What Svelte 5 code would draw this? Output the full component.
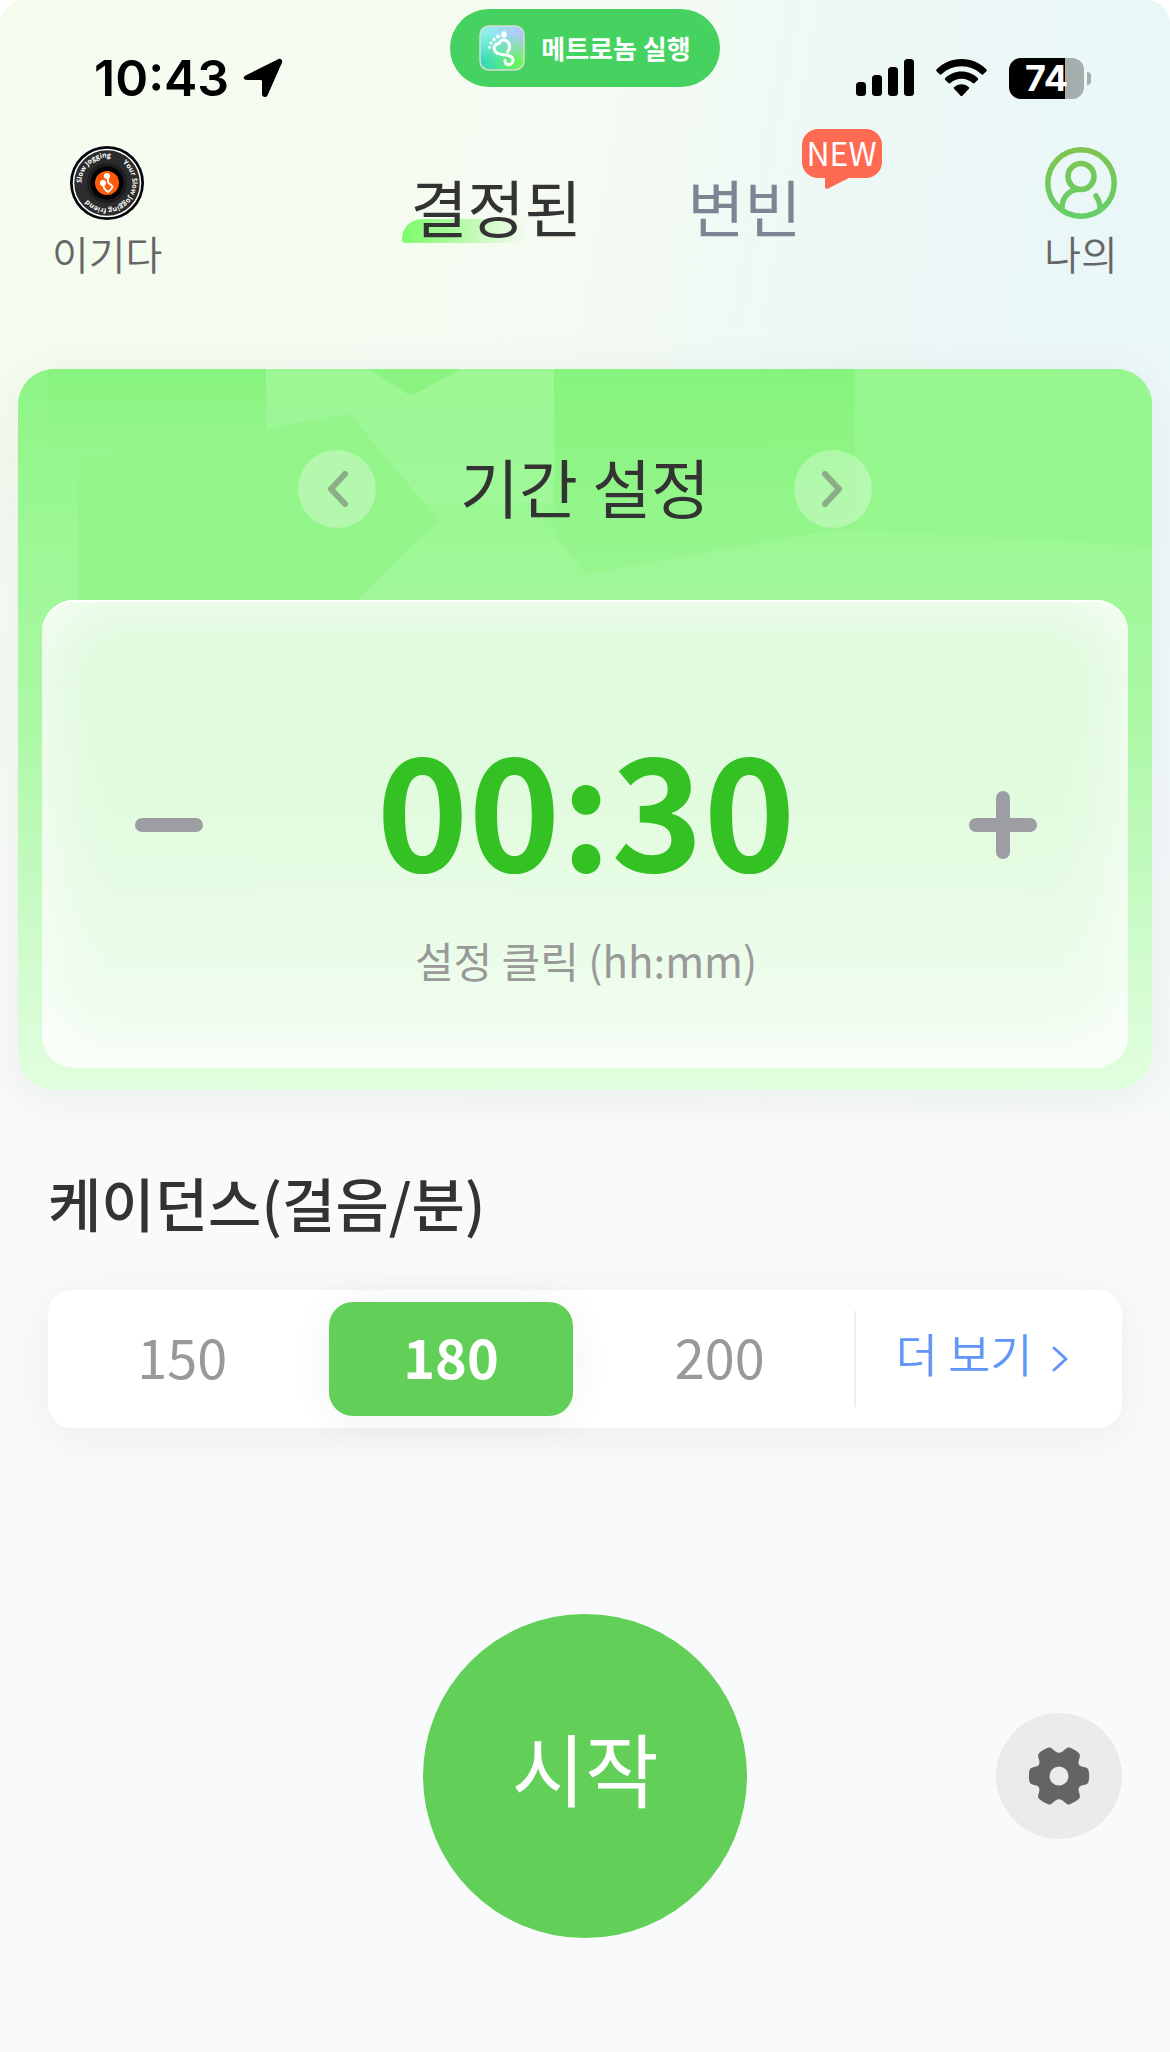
<script lang="ts">
    const cadences: number[] = [150, 180, 200];
    const modes: string[] = ['기간 설정', '거리 설정'];

    let cadence = $state(180);
    let minutes = $state(30);
    let tab = $state('fixed');
    let mode = $state(0);

    const clock = $derived(
        String(Math.floor(minutes / 60)).padStart(2, '0') + ':' + String(minutes % 60).padStart(2, '0')
    );

    function changeMinutes(step: number) {
        minutes = Math.max(5, minutes + step);
    }

    function changeMode() {
        mode = (mode + 1) % modes.length;
    }
</script>

<main>
    <header class="status-bar">
        <div class="status-left">
            <span class="time">10:43</span>
            <svg class="location" viewBox="0 0 40 40" aria-hidden="true">
                <path d="M2.6 17.4 35 1.2c2.7-1.3 5 .9 3.9 3.6L24.6 37.2c-1.2 2.7-5.6 2.3-5.6-1.2V23.4c0-1-.5-1.5-1.5-1.5H4C.2 21.900-.5 18.900 2.600 17.400Z" />
            </svg>
        </div>

        <a class="live-pill" href="#metronome">
            <svg class="app-icon" viewBox="0 0 46 46" aria-hidden="true">
                <defs>
                    <linearGradient id="app-bg" x1="0" y1="0" x2="1" y2="0">
                        <stop offset="0" stop-color="#86f6e8" />
                        <stop offset="1" stop-color="#b3c4fb" />
                    </linearGradient>
                    <linearGradient id="app-low" x1="0" y1="0" x2="1" y2="0">
                        <stop offset="0" stop-color="#2fd8c0" />
                        <stop offset="1" stop-color="#72f94b" />
                    </linearGradient>
                    <linearGradient id="app-fade" x1="0" y1="0" x2="0" y2="1">
                        <stop offset="0.2" stop-color="#000" />
                        <stop offset="0.8" stop-color="#fff" />
                    </linearGradient>
                    <mask id="app-mask"><rect width="46" height="46" fill="url(#app-fade)" /></mask>
                </defs>
                <rect x="1" y="1" width="44" height="44" rx="9" fill="url(#app-bg)" />
                <rect x="1" y="1" width="44" height="44" rx="9" fill="url(#app-low)" mask="url(#app-mask)" />
                <rect x="1" y="1" width="44" height="44" rx="9" fill="none" stroke="#d5dcd8" stroke-width="1.500" />
                <g fill="#fff">
                    <ellipse cx="25" cy="9.500" rx="2.700" ry="3.300" />
                    <circle cx="19" cy="11.500" r="2" />
                    <circle cx="15" cy="14.500" r="1.700" />
                    <circle cx="12" cy="18" r="1.500" />
                    <circle cx="10.500" cy="22.500" r="1.400" />
                </g>
                <path d="M28.500 27c3-3 3-9-1.500-11.500-3.500-1.500-6.500.5-7 3-4 0-6 4-4 7.500 2.500 4.500 8.500 3 13.500 4.500 5.500 1.500 5.500 6.500 2.500 8.500-3 1.500-6.500 0-6-3.500" fill="none" stroke="#fff" stroke-width="3" stroke-linecap="round" stroke-linejoin="round" />
            </svg>
            <span>메트로놈 실행</span>
        </a>

        <div class="status-right">
            <svg class="signal" viewBox="0 0 58 38" aria-hidden="true">
                <rect x="0" y="23" width="10" height="14" rx="3.500" />
                <rect x="16" y="16" width="10" height="21" rx="3.500" />
                <rect x="32" y="8" width="10" height="29" rx="3.500" />
                <rect x="48" y="0" width="10" height="37" rx="3.500" />
            </svg>
            <svg class="wifi" viewBox="0 0 51 38" aria-hidden="true">
                <path d="M25.500 0C35.500 0 44 4 50.300 10.200c.7.700.7 1.400.1 2l-3 3.100c-.6.600-1.200.6-1.900 0C40 10.200 33 7.300 25.500 7.300S11 10.200 5.500 15.300c-.7.600-1.300.6-1.900 0l-3-3.100c-.6-.6-.6-1.300.1-2C7 4 15.500 0 25.500 0Z" />
                <path d="M25.500 12.500c6.400 0 12 2.400 16.200 6.500.6.600.6 1.300 0 1.900l-3.100 3.100c-.6.600-1.200.6-1.900 0-3-2.700-6.900-4.300-11.200-4.300s-8.200 1.600-11.200 4.300c-.7.600-1.300.6-1.900 0l-3.100-3.100c-.6-.6-.6-1.300 0-1.900 4.200-4.100 9.800-6.500 16.200-6.500Z" />
                <path d="M25.500 25.200c2.800 0 5.300 1.100 7.200 2.800.7.700.7 1.300 0 2l-6.100 6.500c-.7.700-1.500.7-2.200 0L18.300 30c-.7-.7-.7-1.300 0-2 1.900-1.700 4.400-2.800 7.200-2.800Z" />
            </svg>
            <div class="battery">
                <span class="charge">74</span>
                <span class="cap"></span>
            </div>
        </div>
    </header>

    <nav class="top-nav">
        <a class="shortcut" href="#music">
            <svg viewBox="0 0 74 74" aria-hidden="true">
                <defs>
                    <path id="disc-ring" d="M11.500 37a25.500 25.500 0 0 1 51 0a25.500 25.500 0 0 1-51 0" />
                </defs>
                <circle cx="37" cy="37" r="37" fill="#05050c" />
                <circle cx="37" cy="37" r="33.500" fill="#2c2c2c" stroke="#fff" stroke-width="1.500" />
                <circle cx="37" cy="37" r="20" fill="#1d1d1d" />
                <circle cx="37" cy="37" r="16.500" fill="#020202" />
                <circle cx="37" cy="37" r="12" fill="#ff5b0a" />
                <text class="disc-text"><textPath href="#disc-ring">Slow Jogging&nbsp;&nbsp;&nbsp;&nbsp;&nbsp;&nbsp;&nbsp;Your Slow Jogging friend</textPath></text>
                <path d="M38 29.500v6.500c0 2 5 3 4.500 5-.8 2-3 4-4.500 5-2-1.500-5-4.500-5-8" fill="none" stroke="#fff" stroke-width="2" />
                <circle cx="37" cy="30" r="3" fill="#fff" />
                <circle cx="33" cy="37" r="3" fill="#fff" />
            </svg>
            <span>이기다</span>
        </a>

        <div class="tabs">
            <button class="tab" class:selected={tab === 'fixed'} onclick={() => (tab = 'fixed')}>
                <span class="tab-text">결정된</span>
            </button>
            <button class="tab" class:selected={tab === 'variable'} onclick={() => (tab = 'variable')}>
                <span class="tab-text">변빈</span>
                <span class="new-badge">
                    <svg viewBox="0 0 26 14" aria-hidden="true"><path d="M0 0h26L3 11.500c-1.500.8-3 0-3-1.500Z" fill="#ff6a52" /></svg>
                    NEW
                </span>
            </button>
        </div>

        <a class="shortcut" href="#me">
            <svg viewBox="0 0 74 74" fill="none" stroke="url(#me-line)" stroke-width="5.500" stroke-linecap="round" aria-hidden="true">
                <defs>
                    <linearGradient id="me-line" gradientUnits="userSpaceOnUse" x1="0" y1="0" x2="0" y2="74">
                        <stop offset="0" stop-color="#7fc44e" />
                        <stop offset="1" stop-color="#65cf6b" />
                    </linearGradient>
                </defs>
                <circle cx="37" cy="37" r="33.200" />
                <circle cx="37" cy="30.500" r="13" />
                <path d="M18 62c0-11 8-18.500 16-18.500M52 50c2.500 3.500 4 7.500 4 12" />
            </svg>
            <span>나의</span>
        </a>
    </nav>

    <section class="timer-card">
        <svg class="shapes" viewBox="0 0 1134 231" preserveAspectRatio="none" aria-hidden="true">
            <defs>
                <linearGradient id="shape-dark" x1="0" y1="0" x2="0" y2="1">
                    <stop offset="0" stop-color="#87f37e" />
                    <stop offset="1" stop-color="#98f68f" />
                </linearGradient>
            </defs>
            <path d="M30 0H248V60L60 92H30Z" fill="url(#shape-dark)" />
            <path d="M248 0H536V134H248Z" fill="#a2f89b" opacity="0.700" />
            <path d="M350 0H443L393 27Z" fill="#8bf382" />
            <path d="M60 92 332 45 420 151 339 231H60Z" fill="#93f58a" />
            <path d="M536 0H1134V177L821 160 567 205 525 150 536 134Z" fill="#97f78f" />
            <path d="M536 0H837V161L821 160 567 205 536 165Z" fill="url(#shape-dark)" />
        </svg>

        <div class="mode-row">
            <button class="round" aria-label="이전" onclick={changeMode}>
                <svg viewBox="0 0 36 36" aria-hidden="true"><path d="M26 3 12 18 26 33" /></svg>
            </button>
            <h1>{modes[mode]}</h1>
            <button class="round" aria-label="다음" onclick={changeMode}>
                <svg viewBox="0 0 36 36" aria-hidden="true"><path d="M10 3 24 18 10 33" /></svg>
            </button>
        </div>

        <div class="panel">
            <button class="step" aria-label="감소" onclick={() => changeMinutes(-5)}>
                <svg viewBox="0 0 70 70" aria-hidden="true"><path d="M8 35H62" /></svg>
            </button>
            <button class="clock">
                <span class="digits">{clock}</span>
                <span class="hint">설정 클릭 (hh:mm)</span>
            </button>
            <button class="step" aria-label="증가" onclick={() => changeMinutes(5)}>
                <svg viewBox="0 0 70 70" aria-hidden="true"><path d="M8 35H62M35 8V62" /></svg>
            </button>
        </div>
    </section>

    <section class="cadence">
        <h2>케이던스(걸음/분)</h2>
        <div class="segments">
            {#each cadences as value}
                <label class="segment" class:active={cadence === value}>
                    <input type="radio" name="cadence" {value} bind:group={cadence} />
                    <span>{value}</span>
                </label>
            {/each}
            <button class="more">
                <span>더 보기</span>
                <svg viewBox="0 0 18 28" aria-hidden="true"><path d="M3 3 15 14 3 25" /></svg>
            </button>
        </div>
    </section>

    <footer class="actions">
        <button class="start">시작</button>
        <button class="settings" aria-label="설정">
            <svg viewBox="0 0 62 62" aria-hidden="true">
                <path fill-rule="evenodd" d="M20 2.800c1.500-.5 3-.1 4.200 1l3.300 2.700c2.300 1.700 4.700 1.700 7 0l3.300-2.700c1.200-1.100 2.700-1.500 4.200-1 3.300 1.200 6.200 2.900 8.700 5.100 1.200 1.100 1.500 2.500 1 4l-1 4.200c-.7 2.500.7 4.900 3 5.400l4 .9c1.500.4 2.500 1.400 2.900 3 .7 3.700.7 7.500 0 11.200-.4 1.600-1.400 2.600-2.900 3l-4 .9c-2.300.5-3.700 2.900-3 5.400l1 4.200c.5 1.500.2 2.900-1 4-2.500 2.200-5.400 3.900-8.700 5.100-1.500.5-3 .1-4.200-1l-3.300-2.700c-2.300-1.700-4.700-1.700-7 0l-3.300 2.700c-1.200 1.100-2.700 1.500-4.200 1-3.300-1.200-6.200-2.900-8.700-5.100-1.200-1.100-1.500-2.500-1-4l1-4.200c.7-2.500-.7-4.900-3-5.400l-4-.9c-1.500-.4-2.500-1.400-2.900-3-.7-3.700-.7-7.500 0-11.200.4-1.600 1.400-2.600 2.900-3l4-.9c2.300-.5 3.700-2.900 3-5.400l-1-4.200c-.5-1.500-.2-2.900 1-4 2.500-2.200 5.400-3.900 8.700-5.100ZM31 21.500a9.500 9.500 0 1 0 0 19 9.500 9.500 0 0 0 0-19Z" fill="#646464" />
            </svg>
        </button>
    </footer>
</main>

<style>
    :global(body) {
        margin: 0;
        background: #fff;
    }

    main {
        min-height: 100vh;
        box-sizing: border-box;
        overflow: hidden;
        border-radius: 24px 24px 0 0;
        font-family: 'Noto Sans CJK KR', 'Noto Sans', sans-serif;
        color: #333;
        background:
            linear-gradient(to bottom, rgba(249, 250, 251, 0) 300px, #f9fafb 1200px, #f9fafc 1500px),
            linear-gradient(100deg, #f5fcef 0%, #f5fbf2 40%, #edf8f5 56%, #eaf7f8 75%);
    }

    button {
        border: 0;
        padding: 0;
        background: none;
        font: inherit;
        color: inherit;
        cursor: pointer;
    }

    a {
        color: inherit;
        text-decoration: none;
    }

    svg {
        display: block;
        flex: none;
    }

    .status-bar {
        display: grid;
        grid-template-columns: 1fr auto 1fr;
        height: 146px;
        padding: 0 80px;
        box-sizing: border-box;
        font-family: Inter, sans-serif;
        color: #000;
    }

    .status-left,
    .status-right {
        display: flex;
        align-items: center;
        height: 42px;
        margin-top: 57px;
    }

    .status-left {
        padding-left: 14px;
    }

    .time {
        font-size: 50px;
        font-weight: 600;
        line-height: 42px;
    }

    .location {
        width: 40px;
        height: 40px;
        margin-left: 14px;
    }

    .live-pill {
        display: flex;
        align-items: center;
        gap: 16px;
        height: 78px;
        margin-top: 9px;
        padding: 0 29px;
        box-sizing: border-box;
        border-radius: 39px;
        background: #46d260;
        color: #fff;
        font: 700 26px/36px 'Noto Sans CJK KR', sans-serif;
    }

    .app-icon {
        width: 46px;
        height: 46px;
    }

    .status-right {
        justify-content: flex-end;
    }

    .signal {
        width: 58px;
        height: 38px;
        margin-right: 22px;
    }

    .wifi {
        width: 51px;
        height: 38px;
        margin-right: 22px;
    }

    .battery {
        position: relative;
        width: 75px;
        height: 41px;
        margin-right: 6px;
        border-radius: 12px;
        background: linear-gradient(to right, #000 75%, #a5adad 75%);
        color: #fff;
        text-align: center;
    }

    .charge {
        font-size: 36px;
        font-weight: 700;
        line-height: 41px;
    }

    .cap {
        position: absolute;
        right: -7px;
        top: 14px;
        width: 4px;
        height: 13px;
        border-radius: 0 4px 4px 0;
        background: #a5adad;
    }

    .top-nav {
        display: grid;
        grid-template-columns: 1fr auto 1fr;
        height: 223px;
        padding: 0 52px;
    }

    .shortcut {
        display: flex;
        flex-direction: column;
        align-items: center;
        justify-self: start;
        height: 140px;
        font-size: 40px;
        font-weight: 350;
        line-height: 66px;
        color: #666;
    }

    .shortcut:last-child {
        justify-self: end;
    }

    .shortcut svg {
        width: 74px;
        height: 74px;
    }

    .disc-text {
        font: 700 7px 'Open Sans', sans-serif;
        fill: #fff;
    }

    .tabs {
        display: flex;
        align-items: flex-start;
        gap: 106px;
        padding: 16px 0 0 42px;
    }

    .tab {
        position: relative;
        font-size: 62px;
        font-weight: 400;
        line-height: 88px;
        color: #7d8494;
    }

    .tab.selected {
        color: #333;
    }

    .tab.selected::before {
        content: '';
        position: absolute;
        left: -8px;
        bottom: 7px;
        width: 124px;
        height: 24px;
        border-radius: 20px 0 0 4px;
        background: linear-gradient(to right, #7cfb68, rgba(160, 250, 150, 0));
    }

    .tab-text {
        position: relative;
    }

    .new-badge {
        position: absolute;
        left: 114px;
        top: -33px;
        width: 80px;
        height: 49px;
        border-radius: 16px;
        background: #ff6a52;
        color: #fff;
        font: 400 32px/46px 'Noto Sans CJK KR', sans-serif;
        text-align: center;
    }

    .new-badge svg {
        position: absolute;
        left: 23px;
        top: 48px;
        width: 26px;
        height: 14px;
    }

    .timer-card {
        position: relative;
        margin: 0 18px;
        padding: 0 24px 22px;
        overflow: hidden;
        border-radius: 36px;
        background: linear-gradient(to bottom, #8ef585 0%, #9df896 25%, #abf8a5 48%, #dcfdda 93%, #dffedd 100%);
    }

    .timer-card,
    .segments {
        box-shadow: 0 8px 50px rgba(0, 0, 0, 0.06);
    }

    .shapes {
        position: absolute;
        left: 0;
        top: 0;
        width: 100%;
        height: 231px;
    }

    .mode-row {
        position: relative;
        display: flex;
        align-items: center;
        justify-content: center;
        gap: 84px;
        height: 231px;
        padding-top: 8px;
        box-sizing: border-box;
    }

    .round {
        display: grid;
        place-items: center;
        width: 78px;
        height: 78px;
        border-radius: 50%;
        background: rgba(255, 255, 255, 0.3);
    }

    .round svg {
        width: 36px;
        height: 36px;
    }

    .round path {
        fill: none;
        stroke: #8bae87;
        stroke-width: 6;
        stroke-linecap: round;
        stroke-linejoin: round;
    }

    h1,
    h2 {
        margin: 0;
    }

    h1 {
        padding-bottom: 8px;
        font-size: 64px;
        font-weight: 400;
        line-height: 80px;
    }

    .panel {
        position: relative;
        display: flex;
        align-items: flex-start;
        justify-content: space-between;
        height: 468px;
        padding: 0 90px 0 92px;
        box-sizing: border-box;
        border-radius: 32px;
        background: linear-gradient(to bottom, #ddf9da 0%, #e2fbdf 45%, #f3fdf2 100%);
        box-shadow: inset 0 0 80px rgba(255, 255, 255, 0.9), inset 0 2px 0 #fff;
    }

    .step {
        margin-top: 190px;
    }

    .step svg {
        width: 70px;
        height: 70px;
    }

    .step path {
        fill: none;
        stroke: #9c9ea4;
        stroke-width: 14;
        stroke-linecap: round;
    }

    .clock {
        display: flex;
        flex-direction: column;
        align-items: center;
        padding-top: 126px;
    }

    .digits {
        font-size: 156px;
        font-weight: 700;
        line-height: 156px;
        color: #34c124;
    }

    .hint {
        margin-top: 48px;
        font-size: 42px;
        line-height: 60px;
        color: #999;
    }

    .cadence {
        padding: 72px 48px 0;
    }

    h2 {
        font-size: 58px;
        font-weight: 500;
        line-height: 80px;
    }

    .segments {
        display: grid;
        grid-template-columns: repeat(3, 1fr) 268px;
        align-items: center;
        height: 138px;
        margin-top: 48px;
        border-radius: 24px;
        background: #fff;
    }

    .segment {
        position: relative;
        margin: 0 12px;
        padding-bottom: 6px;
        border-radius: 24px;
        font-size: 54px;
        line-height: 108px;
        text-align: center;
        color: #999;
        cursor: pointer;
    }

    .segment input {
        position: absolute;
        inset: 0;
        margin: 0;
        opacity: 0;
    }

    .segment.active {
        background: #62cf58;
        color: #fff;
        font-weight: 700;
        box-shadow: 0 4px 40px rgba(0, 0, 0, 0.06);
    }

    .more {
        display: flex;
        align-items: center;
        justify-content: center;
        gap: 18px;
        height: 96px;
        padding-right: 14px;
        border-left: 2px solid #eee;
        font-size: 46px;
        font-weight: 350;
        line-height: 64px;
        color: #6196f8;
    }

    .more span {
        padding-bottom: 14px;
    }

    .more svg {
        width: 18px;
        height: 28px;
    }

    .more path {
        fill: none;
        stroke: #6196f8;
        stroke-width: 3;
        stroke-linecap: round;
        stroke-linejoin: round;
    }

    .actions {
        display: grid;
        grid-template-columns: 1fr auto 1fr;
        align-items: center;
        padding: 186px 48px 114px;
    }

    .start {
        grid-column: 2;
        width: 324px;
        height: 324px;
        padding-bottom: 20px;
        border-radius: 50%;
        background: #62cf58;
        color: #fff;
        font-size: 80px;
        line-height: 120px;
    }

    .settings {
        display: grid;
        place-items: center;
        justify-self: end;
        width: 126px;
        height: 126px;
        border-radius: 50%;
        background: #e9ebec;
    }

    .settings svg {
        width: 62px;
        height: 62px;
    }
</style>
